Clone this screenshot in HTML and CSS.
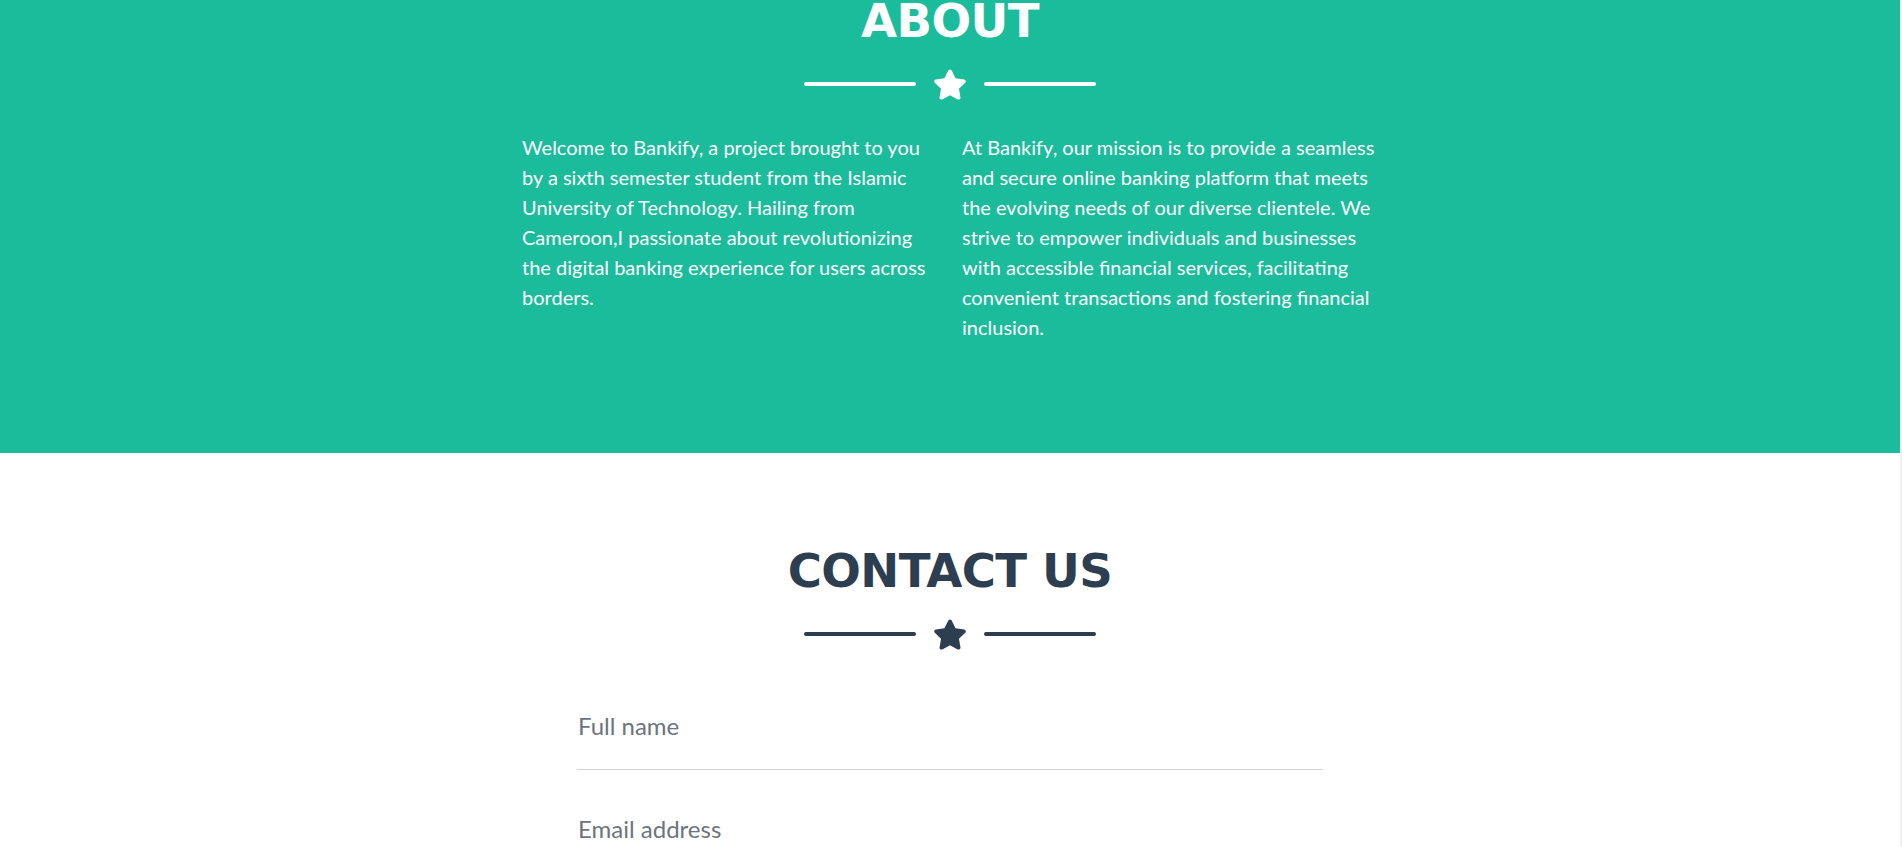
FILE: index.html
```html
<!DOCTYPE html>
<html lang="en">
<head>
<meta charset="utf-8">
<title>Bankify</title>
<link rel="stylesheet" href="styles.css">
</head>
<body>
<div class="page">
  <section class="section section-about">
    <h2 class="section-heading">About</h2>
    <div class="divider">
      <span class="divider-line"></span>
      <svg class="divider-icon" viewBox="0 0 576 512" aria-hidden="true"><path d="M259.3 17.8L194 150.2 47.9 171.5c-26.2 3.8-36.7 36.1-17.7 54.6l105.7 103-25 145.5c-4.5 26.3 23.2 46 46.4 33.7L288 439.6l130.7 68.7c23.2 12.2 50.9-7.4 46.4-33.7l-25-145.5 105.7-103c19-18.5 8.5-50.8-17.7-54.6L382 150.2 316.7 17.8c-11.7-23.6-45.6-23.9-57.4 0z"/></svg>
      <span class="divider-line"></span>
    </div>
    <div class="about-columns">
      <div class="about-col">
        <p class="lead">Welcome to Bankify, a project brought to you by a sixth semester student from the Islamic University of Technology. Hailing from Cameroon,I passionate about revolutionizing the digital banking experience for users across borders.</p>
      </div>
      <div class="about-col">
        <p class="lead">At Bankify, our mission is to provide a seamless and secure online banking platform that meets the evolving needs of our diverse clientele. We strive to empower individuals and businesses with accessible financial services, facilitating convenient transactions and fostering financial inclusion.</p>
      </div>
    </div>
  </section>
  <section class="section section-contact">
    <h2 class="section-heading">Contact Us</h2>
    <div class="divider">
      <span class="divider-line"></span>
      <svg class="divider-icon" viewBox="0 0 576 512" aria-hidden="true"><path d="M259.3 17.8L194 150.2 47.9 171.5c-26.2 3.8-36.7 36.1-17.7 54.6l105.7 103-25 145.5c-4.5 26.3 23.2 46 46.4 33.7L288 439.6l130.7 68.7c23.2 12.2 50.9-7.4 46.4-33.7l-25-145.5 105.7-103c19-18.5 8.5-50.8-17.7-54.6L382 150.2 316.7 17.8c-11.7-23.6-45.6-23.9-57.4 0z"/></svg>
      <span class="divider-line"></span>
    </div>
    <form class="contact-form">
      <div class="field"><input class="field-input" type="text" placeholder="Full name"></div>
      <div class="field"><input class="field-input" type="email" placeholder="Email address"></div>
      <div class="field"><input class="field-input" type="tel" placeholder="Phone number"></div>
    </form>
  </section>
</div>
</body>
</html>
```
FILE: styles.css
```css
html, body {
  margin: 0;
  padding: 0;
}
body {
  background: #f1f1f1;
  font-family: "Lato", "Liberation Sans", sans-serif;
  overflow: hidden;
  height: 847px;
}
.page {
  margin-right: 2px;
  background: #ffffff;
}
.section {
  display: flex;
  flex-direction: column;
  align-items: center;
}
.section-heading {
  margin: 0;
  font-family: "DejaVu Sans", "Inter", sans-serif;
  font-weight: 700;
  font-size: 46.6px;
  line-height: 48px;
  letter-spacing: -0.6px;
  text-transform: uppercase;
  text-align: center;
}
.section-about {
  background: #1abc9c;
  color: #ffffff;
  padding: 0 0 111px;
}
.section-about .section-heading {
  margin-top: -3px;
  color: #ffffff;
}
.section-contact {
  padding: 94px 0 0;
  color: #2c3e50;
}
.section-contact .section-heading {
  color: #2c3e50;
}
.divider {
  margin-top: 23px;
  height: 32px;
  display: flex;
  align-items: center;
  gap: 17px;
}
.divider-line {
  width: 112px;
  height: 4px;
  border-radius: 16px;
  background: currentColor;
}
.divider-icon {
  width: 34px;
  height: 31px;
  fill: currentColor;
}
.about-columns {
  margin-top: 32px;
  width: 880px;
  display: grid;
  grid-template-columns: 1fr 1fr;
}
.about-col {
  padding: 0 12px;
}
.lead {
  margin: 0;
  font-size: 20px;
  line-height: 30px;
  font-weight: 400;
}
.contact-form {
  margin-top: 18px;
  width: 746px;
}
.field {
  padding: 43px 0 29px;
  border-bottom: 1px solid #d0d4d9;
}
.field + .field {
  padding-top: 44px;
}
.field-input {
  display: block;
  width: 100%;
  height: 29px;
  padding: 0 0 0 1px;
  margin: 0;
  border: 0;
  outline: none;
  background: transparent;
  font-family: "Lato", "Liberation Sans", sans-serif;
  font-size: 24px;
  line-height: 29px;
  color: #212529;
}
.field-input::placeholder {
  color: #6c757d;
  opacity: 1;
}
```
